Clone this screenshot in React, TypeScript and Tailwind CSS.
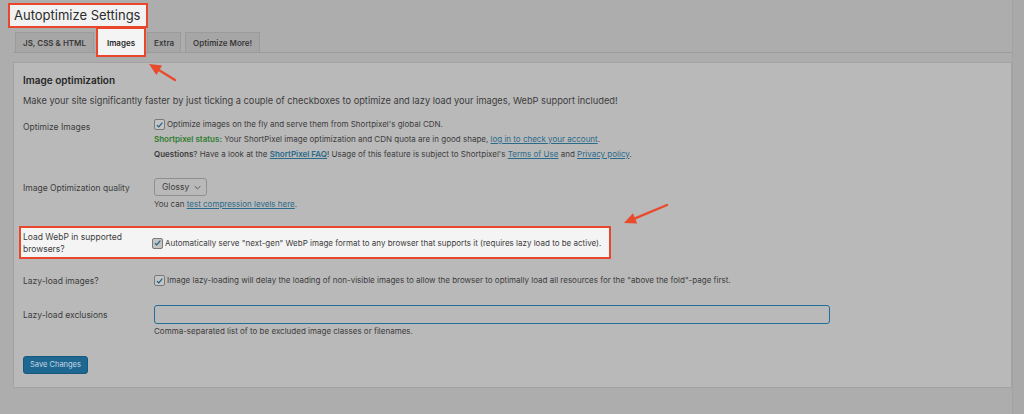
import React from "react";

const font = "font-['Inter','Liberation_Sans',sans-serif]";

function Check() {
  return (
    <span className="inline-flex items-center justify-center size-[11px] shrink-0 rounded-[2px] border border-[#7a7a7a] bg-[#c4c4c4] mr-[2px]">
      <svg viewBox="0 0 12 12" className="size-[10px]">
        <path d="M2.5 6.2 L5 8.6 L9.8 2.8" fill="none" stroke="#1d5d82" strokeWidth="1.6" />
      </svg>
    </span>
  );
}

function Arrow({ x1, y1, x2, y2 }: { x1: number; y1: number; x2: number; y2: number }) {
  const a = Math.atan2(y2 - y1, x2 - x1);
  const L = 12;
  const W = 5.5;
  const bx = x2 - Math.cos(a) * L;
  const by = y2 - Math.sin(a) * L;
  const px = -Math.sin(a) * W;
  const py = Math.cos(a) * W;
  return (
    <>
      <line x1={x1} y1={y1} x2={bx} y2={by} stroke="#ea4a2c" strokeWidth="2.4" strokeLinecap="round" />
      <polygon points={`${x2},${y2} ${bx + px},${by + py} ${bx - px},${by - py}`} fill="#ea4a2c" />
    </>
  );
}

function Row({ label, children, className = "" }: { label: React.ReactNode; children: React.ReactNode; className?: string }) {
  return (
    <div className={`flex ${className}`}>
      <div className="w-[131px] shrink-0 text-[8.5px] leading-[12px] text-[#3c3c3c]">{label}</div>
      <div className="flex-1 text-[8px] leading-[15px] text-[#3c3c3c]">{children}</div>
    </div>
  );
}

const link = "text-[#2a6a8a] underline";

export default function App() {
  return (
    <div className={`relative w-[1024px] h-[414px] overflow-hidden bg-[#adadad] ${font}`}>
      <div className="pl-[8px] pt-[3px]">
        <div className="w-[140px] h-[25px] border-2 border-[#e8472b] bg-[#f2f2f2] pl-[4px] text-[13px] leading-[21px] whitespace-nowrap text-[#2b2b2b]">
          Autoptimize Settings
        </div>
      </div>

      {/* tabs */}
      <div className="ml-[13px] mt-[4px] flex items-end h-[21px] border-b border-[#9b9b9b] text-[8px] font-semibold text-[#3a3a3a]">
        <div className="ml-[2px] h-[20px] px-[7px] flex items-center bg-[#a6a6a6] border border-[#9b9b9b] border-b-0">JS, CSS &amp; HTML</div>
        <div className="relative ml-[3px] h-[21px] w-[48px] -mb-[1px]">
          <div className="absolute -top-[5px] -left-[1px] -right-[1px] h-[30px] border-2 border-[#e8472b] bg-[#f4f4f4] flex items-start justify-center pt-[8px] text-[#262626]">
            Images
          </div>
        </div>
        <div className="ml-[2px] h-[20px] px-[6px] flex items-center bg-[#a6a6a6] border border-[#9b9b9b] border-b-0">Extra</div>
        <div className="ml-[4px] h-[20px] px-[7px] flex items-center bg-[#a6a6a6] border border-[#9b9b9b] border-b-0">Optimize More!</div>
      </div>

      {/* panel */}
      <div className="ml-[13px] mt-[9px] w-[999px] h-[326px] bg-[#b9b9b9] border border-[#a2a2a2] pl-[9px] pt-[10px]">
        <div className="text-[10px] font-semibold text-[#262626] leading-[14px]">Image optimization</div>
        <div className="mt-[7px] text-[9.25px] leading-[14px] text-[#3c3c3c]">
          Make your site significantly faster by just ticking a couple of checkboxes to optimize and lazy load your images, WebP support included!
        </div>

        <Row label={<div className="pt-[4px]">Optimize Images</div>} className="mt-[9px]">
          <div className="flex items-center"><Check />Optimize images on the fly and serve them from Shortpixel's global CDN.</div>
          <div>
            <span className="font-semibold text-[#2f7d2f]">Shortpixel status:</span> Your ShortPixel image optimization and CDN quota are in good shape, <span className={link}>log in to check your account</span>.
          </div>
          <div>
            <span className="font-semibold">Questions</span>? Have a look at the <span className={`${link} font-semibold`}>ShortPixel FAQ</span>! Usage of this feature is subject to Shortpixel's <span className={link}>Terms of Use</span> and <span className={link}>Privacy policy</span>.
          </div>
        </Row>

        <Row label={<div className="pt-[4px]">Image Optimization quality</div>} className="mt-[16px]">
          <div className="w-[53px] h-[18px] rounded-[3px] border border-[#8f8f8f] bg-[#b9b9b9] flex items-center justify-between pl-[7px] pr-[5px] text-[8.5px]">
            Glossy
            <svg viewBox="0 0 10 6" className="w-[7px] h-[5px]"><path d="M1 1 L5 5 L9 1" fill="none" stroke="#555" strokeWidth="1.4" /></svg>
          </div>
          <div className="mt-[1px]">You can <span className={link}>test compression levels here</span>.</div>
        </Row>

        <div className="-ml-[4px] mt-[14px] w-[592px] h-[33px] bg-[#f4f4f4] border-2 border-[#e8472b] flex pl-[2px] pt-[3px]">
          <div className="w-[129px] shrink-0 text-[8.5px] leading-[12px] text-[#3c3c3c]">Load WebP in supported<br />browsers?</div>
          <div className="flex items-center h-[24px] text-[8px] text-[#3c3c3c]">
            <Check />Automatically serve "next-gen" WebP image format to any browser that supports it (requires lazy load to be active).
          </div>
        </div>

        <Row label={<div className="pt-[2px]">Lazy-load images?</div>} className="mt-[14px]">
          <div className="flex items-center"><Check />Image lazy-loading will delay the loading of non-visible images to allow the browser to optimally load all resources for the "above the fold"-page first.</div>
        </Row>

        <Row label={<div className="pt-[4px]">Lazy-load exclusions</div>} className="mt-[17px]">
          <div className="w-[676px] h-[19px] rounded-[3px] border-[1.5px] border-[#1f6f9a] bg-[#b9b9b9]" />
          <div className="leading-[13px] mt-[1px]">Comma-separated list of to be excluded image classes or filenames.</div>
        </Row>

        <button className="mt-[18px] h-[18px] px-[6px] rounded-[3px] bg-[#1d6791] border border-[#17597e] text-[7.5px] text-[#c9d8e2]">
          Save Changes
        </button>
      </div>

      <div className="absolute top-0 right-0 w-[12px] h-full bg-[#a9a9a9] border-l border-[#a2a2a2]" />

      <svg className="absolute inset-0 pointer-events-none" width="1024" height="414">
        <Arrow x1={175} y1={80} x2={149} y2={64} />
        <Arrow x1={667} y1={205} x2={624} y2={223} />
      </svg>
    </div>
  );
}
